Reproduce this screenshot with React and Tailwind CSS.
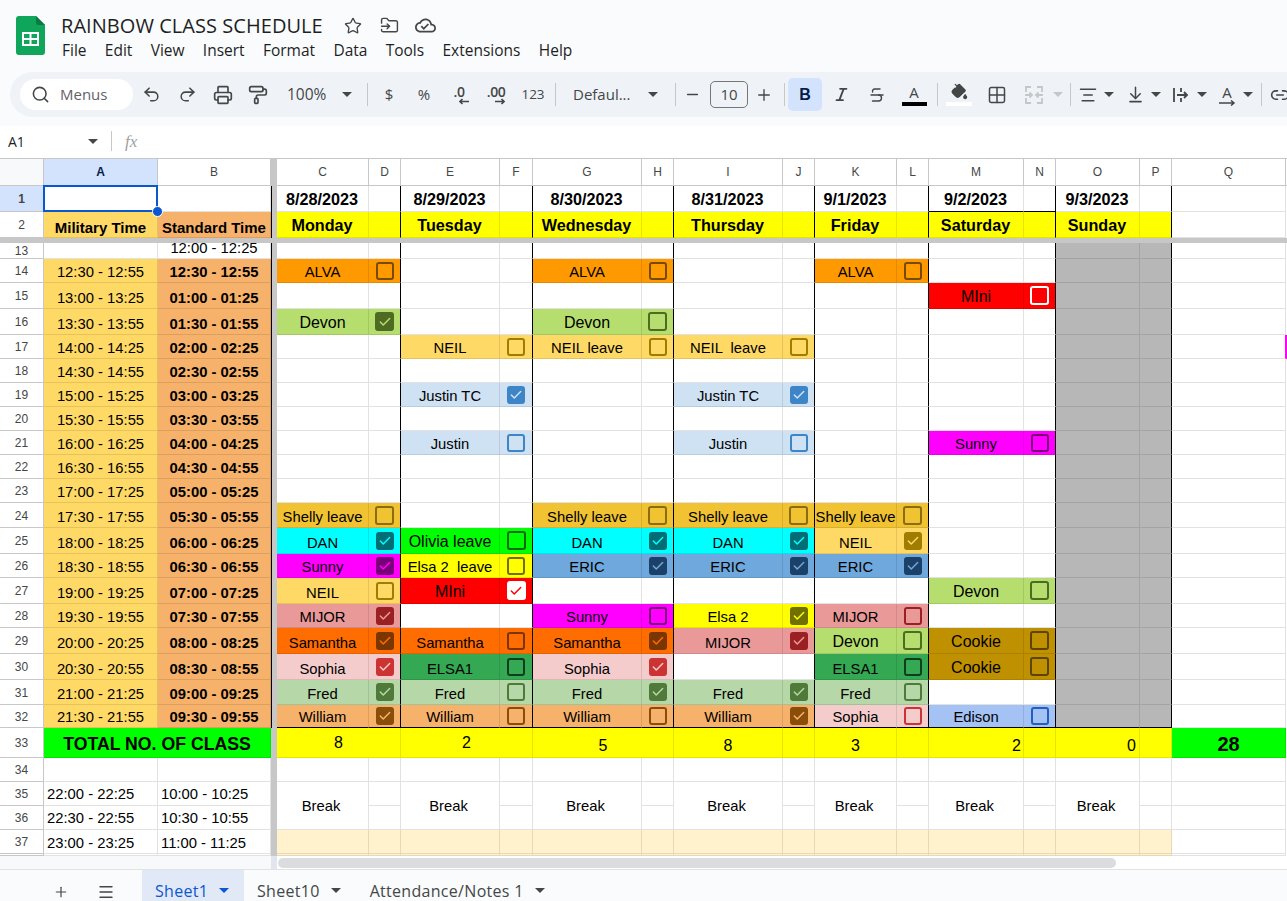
import {
  AlignCenter,
  ArrowDownToLine,
  Check,
  Grid2x2,
  Italic,
  Link2,
  Menu,
  Minus,
  PaintBucket,
  PaintRoller,
  Plus,
  Printer,
  Redo2,
  Search,
  Star,
  Strikethrough,
  Undo2,
  FolderInput,
} from 'lucide-react';

const NAMES = {
  ALVA: { bg: 'bg-[#ff9900]', box: 'border-[#7a4900]', fill: 'bg-[#7a4900]', tick: 'text-[#ff9900]' },
  MIni: { bg: 'bg-[#ff0000]', box: 'border-white', fill: 'bg-white', tick: 'text-[#ff0000]', big: true },
  Devon: { bg: 'bg-[#b6de6e]', box: 'border-[#4f6a22]', fill: 'bg-[#4f6a22]', tick: 'text-[#b6de6e]', big: true },
  NEIL: { bg: 'bg-[#ffd966]', box: 'border-[#a07c00]', fill: 'bg-[#a07c00]', tick: 'text-[#ffd966]' },
  Justin: { bg: 'bg-[#cfe2f3]', box: 'border-[#3d85c6]', fill: 'bg-[#3d85c6]', tick: 'text-[#cfe2f3]' },
  Sunny: { bg: 'bg-[#ff00ff]', box: 'border-[#7a007a]', fill: 'bg-[#7a007a]', tick: 'text-[#ff00ff]' },
  Shelly: { bg: 'bg-[#f1c232]', box: 'border-[#8a6d10]', fill: 'bg-[#8a6d10]', tick: 'text-[#f1c232]' },
  DAN: { bg: 'bg-[#00ffff]', box: 'border-[#006e74]', fill: 'bg-[#006e74]', tick: 'text-[#00ffff]' },
  Olivia: { bg: 'bg-[#00ff00]', box: 'border-[#0a6a0a]', fill: 'bg-[#0a6a0a]', tick: 'text-[#00ff00]', big: true },
  Elsa2: { bg: 'bg-[#ffff00]', box: 'border-[#707000]', fill: 'bg-[#707000]', tick: 'text-[#ffff00]' },
  ERIC: { bg: 'bg-[#6fa8dc]', box: 'border-[#1c4168]', fill: 'bg-[#1c4168]', tick: 'text-[#6fa8dc]' },
  MIJOR: { bg: 'bg-[#ea9999]', box: 'border-[#9a2024]', fill: 'bg-[#9a2024]', tick: 'text-[#ea9999]' },
  Samantha: { bg: 'bg-[#ff6d01]', box: 'border-[#7a3500]', fill: 'bg-[#7a3500]', tick: 'text-[#ff6d01]' },
  Sophia: { bg: 'bg-[#f4cccc]', box: 'border-[#cc3333]', fill: 'bg-[#cc3333]', tick: 'text-[#f4cccc]' },
  ELSA1: { bg: 'bg-[#34a853]', box: 'border-[#0f3d1f]', fill: 'bg-[#0f3d1f]', tick: 'text-[#34a853]' },
  Fred: { bg: 'bg-[#b6d7a8]', box: 'border-[#4f7a3a]', fill: 'bg-[#4f7a3a]', tick: 'text-[#b6d7a8]' },
  William: { bg: 'bg-[#f6b26b]', box: 'border-[#8a4d0a]', fill: 'bg-[#8a4d0a]', tick: 'text-[#f6b26b]' },
  Cookie: { bg: 'bg-[#bf9000]', box: 'border-[#5c4500]', fill: 'bg-[#5c4500]', tick: 'text-[#bf9000]', big: true },
  Edison: { bg: 'bg-[#a4c2f4]', box: 'border-[#2060c0]', fill: 'bg-[#2060c0]', tick: 'text-[#a4c2f4]' },
};

// row number -> one entry per day, Monday first: [style key, label, checked]
const SCHEDULE = {
  14: [['ALVA', 'ALVA', false], null, ['ALVA', 'ALVA', false], null, ['ALVA', 'ALVA', false]],
  15: [null, null, null, null, null, ['MIni', 'MIni', false]],
  16: [['Devon', 'Devon', true], null, ['Devon', 'Devon', false]],
  17: [null, ['NEIL', 'NEIL', false], ['NEIL', 'NEIL leave', false], ['NEIL', 'NEIL  leave', false]],
  19: [null, ['Justin', 'Justin TC', true], null, ['Justin', 'Justin TC', true]],
  21: [null, ['Justin', 'Justin', false], null, ['Justin', 'Justin', false], null, ['Sunny', 'Sunny', false]],
  24: [['Shelly', 'Shelly leave', false], null, ['Shelly', 'Shelly leave', false], ['Shelly', 'Shelly leave', false], ['Shelly', 'Shelly leave', false]],
  25: [['DAN', 'DAN', true], ['Olivia', 'Olivia leave', false], ['DAN', 'DAN', true], ['DAN', 'DAN', true], ['NEIL', 'NEIL', true]],
  26: [['Sunny', 'Sunny', true], ['Elsa2', 'Elsa 2  leave', false], ['ERIC', 'ERIC', true], ['ERIC', 'ERIC', true], ['ERIC', 'ERIC', true]],
  27: [['NEIL', 'NEIL', false], ['MIni', 'MIni', true], null, null, null, ['Devon', 'Devon', false]],
  28: [['MIJOR', 'MIJOR', true], null, ['Sunny', 'Sunny', false], ['Elsa2', 'Elsa 2', true], ['MIJOR', 'MIJOR', false]],
  29: [['Samantha', 'Samantha', true], ['Samantha', 'Samantha', false], ['Samantha', 'Samantha', true], ['MIJOR', 'MIJOR', true], ['Devon', 'Devon', false], ['Cookie', 'Cookie', false]],
  30: [['Sophia', 'Sophia', true], ['ELSA1', 'ELSA1', false], ['Sophia', 'Sophia', true], null, ['ELSA1', 'ELSA1', false], ['Cookie', 'Cookie', false]],
  31: [['Fred', 'Fred', true], ['Fred', 'Fred', false], ['Fred', 'Fred', true], ['Fred', 'Fred', true], ['Fred', 'Fred', false]],
  32: [['William', 'William', true], ['William', 'William', false], ['William', 'William', false], ['William', 'William', true], ['Sophia', 'Sophia', false], ['Edison', 'Edison', false]],
};

const COLS = ['A', 'B', 'C', 'D', 'E', 'F', 'G', 'H', 'I', 'J', 'K', 'L', 'M', 'N', 'O', 'P', 'Q'];
const DATES = ['8/28/2023', '8/29/2023', '8/30/2023', '8/31/2023', '9/1/2023', '9/2/2023', '9/3/2023'];
const DAYS = ['Monday', 'Tuesday', 'Wednesday', 'Thursday', 'Friday', 'Saturday', 'Sunday'];

const pad = (n) => String(n).padStart(2, '0');
function timeLabels(row) {
  const start = 12 * 60 + 30 + (row - 14) * 30;
  const h = Math.floor(start / 60);
  const m = start % 60;
  const std = h > 12 ? h - 12 : h;
  return [`${pad(h)}:${pad(m)} - ${pad(h)}:${pad(m + 25)}`, `${pad(std)}:${pad(m)} - ${pad(std)}:${pad(m + 25)}`];
}

function Cell({ className = '', children }) {
  return (
    <div className={`flex min-w-0 justify-center whitespace-pre border-r border-b border-[#e2e2e2] text-[14.8px] leading-[17px] text-black ${className}`}>
      {children}
    </div>
  );
}

function RowHead({ n, active }) {
  return (
    <div className={`flex items-center justify-center border-r border-b border-[#c7c7c7] pt-[1px] text-[12px] text-[#444746] ${active ? 'bg-[#d3e3fd] font-bold text-[#041e49]' : 'bg-white'}`}>
      {n}
    </div>
  );
}

function Bar({ line = true }) {
  return <div className={`bg-[#c7c7c7] ${line ? 'border-l border-black' : ''}`} />;
}

function Tail({ magenta }) {
  return <div className={magenta ? 'bg-[#ff00ff]' : 'bg-white'} />;
}

function CheckBox({ info, checked, big }) {
  return (
    <span className={`flex items-center justify-center rounded-[3px] border-2 ${big ? 'size-[19px]' : 'size-[18px]'} ${info.box} ${checked ? info.fill : ''}`}>
      {checked && <Check className={`size-[14px] ${info.tick}`} strokeWidth={2.6} />}
    </span>
  );
}

// one day column pair: name cell + checkbox cell
function DayCells({ entry, gray, last }) {
  const edge = last ? 'border-b-black' : '';
  if (!entry) {
    const tone = gray ? 'bg-[#b7b7b7] border-black/10' : '';
    return (
      <>
        <Cell className={`${tone} ${edge}`} />
        <Cell className={`${tone} ${edge} border-r-black`} />
      </>
    );
  }
  const info = NAMES[entry[0]];
  const tone = `${info.bg} border-black/10`;
  return (
    <>
      <Cell className={`${tone} ${edge} ${info.big ? 'items-center pt-[2px] text-[16px]' : 'items-end pb-[1px]'}`}>{entry[1]}</Cell>
      <Cell className={`${tone} ${edge} border-r-black items-center`}>
        <CheckBox info={info} checked={entry[2]} big={entry[0] === 'Shelly' || info.big} />
      </Cell>
    </>
  );
}

function ScheduleRow({ n }) {
  const [mil, std] = timeLabels(n);
  const entries = SCHEDULE[n] || [];
  return (
    <>
      <RowHead n={n} />
      <Cell className="items-end bg-[#ffd966] border-black/10 pb-[1px]">{mil}</Cell>
      <Cell className="items-end bg-[#f6b26b] border-black/10 pb-[1px] font-bold">{std}</Cell>
      <Bar />
      {DAYS.map((day, i) => (
        <DayCells key={day} entry={entries[i]} gray={i === 6} last={n === 32} />
      ))}
      <Cell className={n === 17 ? 'border-r-[#ff00ff]' : ''} />
      <Tail magenta={n === 17} />
    </>
  );
}

function Sheet() {
  return (
    <div className="relative grid h-[697px] grid-cols-[44px_114px_113px_6px_92px_32px_99px_33px_109px_32px_109px_32px_82px_32px_95px_32px_84px_32px_114px_1px] grid-rows-[27px_26px_26px_5px_16px_24px_26px_26px_24px_24px_24px_24px_24px_24px_24px_25px_26px_24px_26px_24px_26px_26px_25px_23px_30px_24px_24px_24px_24px_2px] overflow-hidden bg-white font-['Liberation_Sans',Arial,sans-serif]">
      {/* column letters */}
      <div className="border-r border-b border-[#c7c7c7] bg-[#f8f9fa]" />
      {COLS.slice(0, 2).map((c) => (
        <div key={c} className={`flex items-center justify-center border-r border-b border-[#c7c7c7] text-[12px] ${c === 'A' ? 'bg-[#d3e3fd] font-bold text-[#041e49]' : 'text-[#444746]'}`}>
          {c}
        </div>
      ))}
      <Bar line={false} />
      {COLS.slice(2).map((c) => (
        <div key={c} className="flex items-center justify-center border-r border-b border-[#c7c7c7] text-[12px] text-[#444746]">
          {c}
        </div>
      ))}
      <div className="border-b border-[#c7c7c7]" />

      {/* row 1 */}
      <RowHead n={1} active />
      <Cell />
      <Cell />
      <Bar />
      {DATES.map((d, i) => (
        <DateCells key={d} date={d} saturday={i === 5} />
      ))}
      <Cell />
      <Tail />

      {/* row 2 */}
      <RowHead n={2} />
      <Cell className="items-end bg-[#ffd966] border-black/10 pb-[1px] text-[15px] font-bold">Military Time</Cell>
      <Cell className="items-end bg-[#f6b26b] border-black/10 pb-[1px] text-[15px] font-bold">Standard Time</Cell>
      <Bar />
      {DAYS.map((d) => (
        <DayHead key={d} day={d} />
      ))}
      <Cell />
      <Tail />

      <div className="col-span-full bg-[#c7c7c7]" />

      {/* row 13 is cut by the freeze line */}
      <RowHead n={13} />
      <Cell />
      <Cell className="items-start">
        <span className="-mt-[3px]">12:00 - 12:25</span>
      </Cell>
      <Bar />
      {DAYS.map((d, i) => (
        <DayCells key={d} gray={i === 6} />
      ))}
      <Cell />
      <Tail />

      {[14, 15, 16, 17, 18, 19, 20, 21, 22, 23, 24, 25, 26, 27, 28, 29, 30, 31, 32].map((n) => (
        <ScheduleRow key={n} n={n} />
      ))}

      {/* row 33 totals */}
      <RowHead n={33} />
      <Cell className="col-span-2 items-end bg-[#00ff00] border-black/10 pb-[3px] text-[17.7px] leading-[20px] font-bold">
        TOTAL NO. OF CLASS
      </Cell>
      <Bar line={false} />
      <Total className="col-span-2 items-center pb-[1px]">8</Total>
      <Total className="col-span-2 items-center pb-[1px]">2</Total>
      <Total className="col-span-2 items-end pb-[3px]">5</Total>
      <Total className="items-end pb-[3px]">8</Total>
      <Total />
      <Total className="items-end pb-[3px]">3</Total>
      <Total />
      <Total className="items-end justify-end pr-[2px] pb-[3px]">2</Total>
      <Total />
      <Total className="items-end justify-end pr-[3px] pb-[3px]">0</Total>
      <Total />
      <Cell className="items-center bg-[#00ff00] border-black/10 pt-[3px] text-[20px] font-bold">28</Cell>
      <Tail />

      {/* row 34 */}
      <RowHead n={34} />
      <Cell />
      <Cell />
      <Bar line={false} />
      {DAYS.map((d) => (
        <Blank key={d} />
      ))}
      <Cell />
      <Tail />

      {/* rows 35 and 36 with merged Break cells */}
      <RowHead n={35} />
      <Cell className="items-end justify-start pb-[2px] pl-[3px]">22:00 - 22:25</Cell>
      <Cell className="items-end justify-start pb-[2px] pl-[3px]">10:00 - 10:25</Cell>
      <Bar line={false} />
      {DAYS.map((d) => (
        <div key={d} className="contents">
          <Cell className="row-span-2 items-center pt-[1px] pr-[3px]">Break</Cell>
          <Cell />
        </div>
      ))}
      <Cell />
      <Tail />

      <RowHead n={36} />
      <Cell className="items-end justify-start pb-[2px] pl-[3px]">22:30 - 22:55</Cell>
      <Cell className="items-end justify-start pb-[2px] pl-[3px]">10:30 - 10:55</Cell>
      <Bar line={false} />
      {DAYS.map((d) => (
        <Cell key={d} />
      ))}
      <Cell />
      <Tail />

      {/* row 37 */}
      <RowHead n={37} />
      <Cell className="items-end justify-start pb-[1px] pl-[3px]">23:00 - 23:25</Cell>
      <Cell className="items-end justify-start pb-[1px] pl-[3px]">11:00 - 11:25</Cell>
      <Bar line={false} />
      {DAYS.map((d) => (
        <Cream key={d} />
      ))}
      <Cell />
      <Tail />

      {/* sliver of the next row */}
      <RowHead />
      <Cell />
      <Cell />
      <Bar line={false} />
      {DAYS.map((d) => (
        <Cream key={d} />
      ))}
      <Cell />
      <Tail />

      {/* active cell outline */}
      <div className="pointer-events-none absolute top-[26px] left-[43px] h-[27px] w-[115px] border-2 border-[#0b57d0]" />
      <div className="pointer-events-none absolute top-[47px] left-[152px] size-[11px] rounded-full border border-white bg-[#0b57d0]" />
    </div>
  );
}

function DateCells({ date, saturday }) {
  const under = saturday ? 'border-b-black' : '';
  return (
    <>
      <Cell className={`items-center pt-[1px] pr-[1px] text-[16.2px] font-bold ${under}`}>{date}</Cell>
      <Cell className={`border-r-black ${under}`} />
    </>
  );
}

function DayHead({ day }) {
  return (
    <>
      <Cell className="items-center bg-[#ffff00] border-black/10 pt-[1px] pr-[1px] text-[16.2px] font-bold">{day}</Cell>
      <Cell className="bg-[#ffff00] border-black/10 border-r-black" />
    </>
  );
}

function Total({ className = '', children }) {
  return <Cell className={`bg-[#ffff00] border-black/10 text-[16px] ${className}`}>{children}</Cell>;
}

function Blank() {
  return (
    <>
      <Cell />
      <Cell />
    </>
  );
}

function Cream() {
  return (
    <>
      <Cell className="bg-[#fff2cc] border-black/10" />
      <Cell className="bg-[#fff2cc] border-black/10" />
    </>
  );
}

function Caret({ className = '' }) {
  return (
    <svg viewBox="0 0 10 5" className={`h-[5px] w-[10px] fill-current ${className}`}>
      <path d="M0 0h10L5 5z" />
    </svg>
  );
}

function Tool({ className = '', children }) {
  return <div className={`flex h-[24px] shrink-0 items-center justify-center text-[#444746] ${className}`}>{children}</div>;
}

function Sep({ className = '' }) {
  return <div className={`h-[23px] w-px shrink-0 bg-[#c7c7c7] ${className}`} />;
}

function Logo() {
  return (
    <svg viewBox="0 0 29 39" className="h-[39px] w-[29px] shrink-0">
      <path d="M3 0h17l9 9v27a3 3 0 0 1-3 3H3a3 3 0 0 1-3-3V3a3 3 0 0 1 3-3z" fill="#0fa55a" />
      <path d="M20 0l9 9h-7a2 2 0 0 1-2-2z" fill="#0a7a41" />
      <path d="M6 16h17v14H6zm2 2v4h5.500v-4zm7.500 0v4H21v-4zM8 24v4h5.500v-4zm7.500 0v4H21v-4z" fill="#fff" fillRule="evenodd" />
    </svg>
  );
}

function CloudDone() {
  return (
    <svg viewBox="0 0 24 24" className="size-[21px] fill-[#444746]">
      <path d="M19.35 10.04C18.67 6.59 15.64 4 12 4 9.11 4 6.6 5.64 5.35 8.04 2.34 8.36 0 10.91 0 14c0 3.31 2.69 6 6 6h13c2.76 0 5-2.24 5-5 0-2.64-2.05-4.780-4.65-4.96zM19 18H6c-2.21 0-4-1.79-4-4 0-2.05 1.53-3.76 3.56-3.97l1.07-.11.5-.95C8.08 7.14 9.94 6 12 6c2.62 0 4.88 1.86 5.39 4.43l.3 1.5 1.53.11c1.56.1 2.78 1.41 2.78 2.96 0 1.65-1.35 3-3 3zm-9-3.82l-2.09-2.09L6.5 13.5 10 17l6.01-6.01-1.41-1.41z" />
    </svg>
  );
}

function Merge() {
  return (
    <svg viewBox="0 0 20 20" className="size-[20px] fill-none stroke-[#c4c7c5]" strokeWidth="1.8">
      <path d="M7 2H2v5M13 2h5v5M7 18H2v-5M13 18h5v-5M2 9v2M18 9v2M2 10h6M5.500 7.500L8 10l-2.500 2.500M18 10h-6M14.500 7.500L12 10l2.500 2.500" />
    </svg>
  );
}

function WrapIcon() {
  return (
    <svg viewBox="0 0 20 20" className="size-[20px] fill-none stroke-[#444746]" strokeWidth="1.8">
      <path d="M3 3v14M10 3v4M10 13v4M6 10h10M13 7l3 3-3 3" />
    </svg>
  );
}

function RotateIcon() {
  return (
    <div className="relative flex h-[22px] w-[18px] flex-col items-center">
      <span className="text-[15px] leading-[16px] text-[#444746]">A</span>
      <svg viewBox="0 0 18 6" className="h-[6px] w-[18px] fill-none stroke-[#444746]" strokeWidth="1.5">
        <path d="M1 3h15M13 .5L16 3l-3 2.500" />
      </svg>
    </div>
  );
}

function Decimal({ label, right }) {
  return (
    <div className="flex flex-col items-center">
      <span className="text-[14px] leading-[14px] font-semibold tracking-[-0.5px] text-[#444746]">{label}</span>
      <svg viewBox="0 0 10 6" className={`-mt-[1px] h-[7px] w-[10px] fill-none stroke-[#444746] ${right ? 'ml-[8px]' : 'ml-[10px] rotate-180'}`} strokeWidth="1.6">
        <path d="M0 3h9M6.500 .5L9 3 6.500 5.500" />
      </svg>
    </div>
  );
}

function Toolbar() {
  return (
    <div className="mt-[5px] ml-[10px] flex h-[45px] items-center overflow-hidden rounded-l-[23px] bg-[#eff3f8]">
      <div className="ml-[10px] flex h-[31px] w-[113px] shrink-0 items-center rounded-full bg-white pl-[11px]">
        <Search className="size-[19px] text-[#444746]" strokeWidth={2} />
        <span className="ml-[10px] text-[15px] text-[#5f6368]">Menus</span>
      </div>
      <Tool className="w-[37px]"><Undo2 className="size-[19px]" strokeWidth={1.9} /></Tool>
      <Tool className="w-[35px]"><Redo2 className="size-[19px]" strokeWidth={1.9} /></Tool>
      <Tool className="w-[35px]"><Printer className="size-[20px]" strokeWidth={2} /></Tool>
      <Tool className="w-[36px]"><PaintRoller className="size-[20px]" strokeWidth={2} /></Tool>
      <Tool className="ml-[11px] w-[52px] justify-start text-[15.500px]">100%</Tool>
      <Tool className="w-[16px]"><Caret /></Tool>
      <Sep className="ml-[12px]" />
      <Tool className="w-[42px] text-[15px]">$</Tool>
      <Tool className="w-[28px] text-[15px]">%</Tool>
      <Tool className="w-[42px]"><Decimal label=".0" /></Tool>
      <Tool className="w-[32px]"><Decimal label=".00" right /></Tool>
      <Tool className="w-[42px] text-[13.500px]">123</Tool>
      <Sep className="ml-[1px]" />
      <Tool className="ml-[17px] w-[72px] justify-start text-[15px]">Defaul...</Tool>
      <Tool className="w-[16px]"><Caret /></Tool>
      <Sep className="ml-[14px]" />
      <Tool className="w-[32px]"><Minus className="size-[17px]" strokeWidth={1.8} /></Tool>
      <div className="ml-[2px] flex h-[27px] w-[38px] shrink-0 items-center justify-center rounded-[5px] border border-[#747775] text-[15px] text-[#444746]">10</div>
      <Tool className="w-[32px]"><Plus className="size-[18px]" strokeWidth={1.8} /></Tool>
      <Sep className="ml-[4px]" />
      <div className="ml-[3px] flex h-[33px] w-[34px] shrink-0 items-center justify-center rounded-[5px] bg-[#d3e3fd] font-['Liberation_Sans',Arial,sans-serif] text-[16px] font-bold text-[#041e49]">B</div>
      <Tool className="w-[38px]"><Italic className="size-[17px]" strokeWidth={2.6} /></Tool>
      <Tool className="w-[34px]"><Strikethrough className="size-[18px]" strokeWidth={1.9} /></Tool>
      <Tool className="h-[30px] w-[40px]">
        <div className="flex flex-col items-center">
          <span className="text-[15px] leading-[17px] text-[#444746]">A</span>
          <span className="mt-[1px] h-[4px] w-[25px] bg-black" />
        </div>
      </Tool>
      <Sep className="ml-[3px]" />
      <Tool className="h-[30px] w-[42px]">
        <div className="flex flex-col items-center">
          <PaintBucket className="size-[17px] fill-[#444746]" strokeWidth={1.8} />
          <span className="mt-[2px] h-[4px] w-[26px] bg-white" />
        </div>
      </Tool>
      <Tool className="w-[34px]"><Grid2x2 className="size-[20px]" strokeWidth={1.8} /></Tool>
      <Tool className="w-[40px]"><Merge /></Tool>
      <Tool className="w-[8px]"><Caret className="shrink-0 text-[#c4c7c5]" /></Tool>
      <Sep className="ml-[8px]" />
      <Tool className="w-[34px]"><AlignCenter className="size-[20px]" strokeWidth={1.8} /></Tool>
      <Tool className="w-[8px]"><Caret className="shrink-0" /></Tool>
      <Tool className="ml-[5px] w-[34px]"><ArrowDownToLine className="size-[19px]" strokeWidth={1.9} /></Tool>
      <Tool className="w-[8px]"><Caret className="shrink-0" /></Tool>
      <Tool className="ml-[4px] w-[34px]"><WrapIcon /></Tool>
      <Tool className="w-[8px]"><Caret className="shrink-0" /></Tool>
      <Tool className="ml-[4px] w-[34px]"><RotateIcon /></Tool>
      <Tool className="w-[8px]"><Caret className="shrink-0" /></Tool>
      <Sep className="ml-[9px]" />
      <Tool className="w-[36px]"><Link2 className="size-[20px]" strokeWidth={1.9} /></Tool>
    </div>
  );
}

function Tab({ label, active, className = '' }) {
  return (
    <div className={`flex h-[31px] shrink-0 items-center pt-[10px] text-[16px] tracking-[0.3px] ${active ? 'bg-[#e1e9f7] font-medium text-[#0b57d0]' : 'text-[#444746]'} ${className}`}>
      <span>{label}</span>
      <Caret className="ml-[11px]" />
    </div>
  );
}

export default function App() {
  return (
    <div className="flex h-[901px] w-[1287px] flex-col overflow-hidden bg-[#f9fbfd] font-['Open_Sans',sans-serif] text-[#1f1f1f]">
      {/* title and menu */}
      <div className="flex h-[67px] shrink-0 pt-[16px] pl-[16px]">
        <Logo />
        <div className="-mt-[3px] ml-[16px]">
          <div className="flex h-[25px] items-center">
            <span className="text-[20px] tracking-[0.05px]">RAINBOW CLASS SCHEDULE</span>
            <Star className="ml-[21px] size-[18px] text-[#444746]" strokeWidth={1.8} />
            <FolderInput className="ml-[18px] size-[19px] text-[#444746]" strokeWidth={1.8} />
            <span className="ml-[16px]"><CloudDone /></span>
          </div>
          <div className="mt-[1px] flex gap-[18.3px] pl-[1px] text-[15.500px] leading-[22px] text-[#1f1f1f]">
            <span>File</span>
            <span>Edit</span>
            <span>View</span>
            <span>Insert</span>
            <span>Format</span>
            <span>Data</span>
            <span>Tools</span>
            <span>Extensions</span>
            <span>Help</span>
          </div>
        </div>
      </div>

      <Toolbar />

      {/* formula bar */}
      <div className="mt-[9px] flex h-[32px] shrink-0 items-center bg-white pb-[2px]">
        <span className="ml-[8px] w-[80px] text-[14px] text-[#1f1f1f]">A1</span>
        <Caret className="text-[#444746]" />
        <span className="ml-[13px] h-[20px] w-px bg-[#c7c7c7]" />
        <span className="ml-[13px] pt-[2px] font-['Liberation_Serif',serif] text-[17px] text-[#a0a0a0] italic">fx</span>
      </div>
      <div className="h-px shrink-0 bg-[#c7c7c7]" />

      <Sheet />

      {/* horizontal scroll strip */}
      <div className="flex h-[14px] shrink-0 border-b border-[#e2e2e2] bg-white">
        <div className="w-[271px] bg-[#f8f9fa]" />
        <div className="w-[6px] bg-[#e1e5ee]" />
        <div className="mt-[2px] ml-[1px] h-[10px] w-[838px] rounded-full bg-[#dadce0]" />
      </div>

      {/* sheet tabs */}
      <div className="flex flex-1 items-start">
        <Plus className="mt-[14px] ml-[53px] size-[16px] text-[#444746]" strokeWidth={1.8} />
        <Menu className="mt-[13px] ml-[28px] size-[18px] text-[#444746]" strokeWidth={1.8} />
        <Tab label="Sheet1" active className="ml-[27px] w-[102px] pl-[13px]" />
        <Tab label="Sheet10" className="ml-[13px]" />
        <Tab label="Attendance/Notes 1" className="ml-[29px]" />
      </div>
    </div>
  );
}
